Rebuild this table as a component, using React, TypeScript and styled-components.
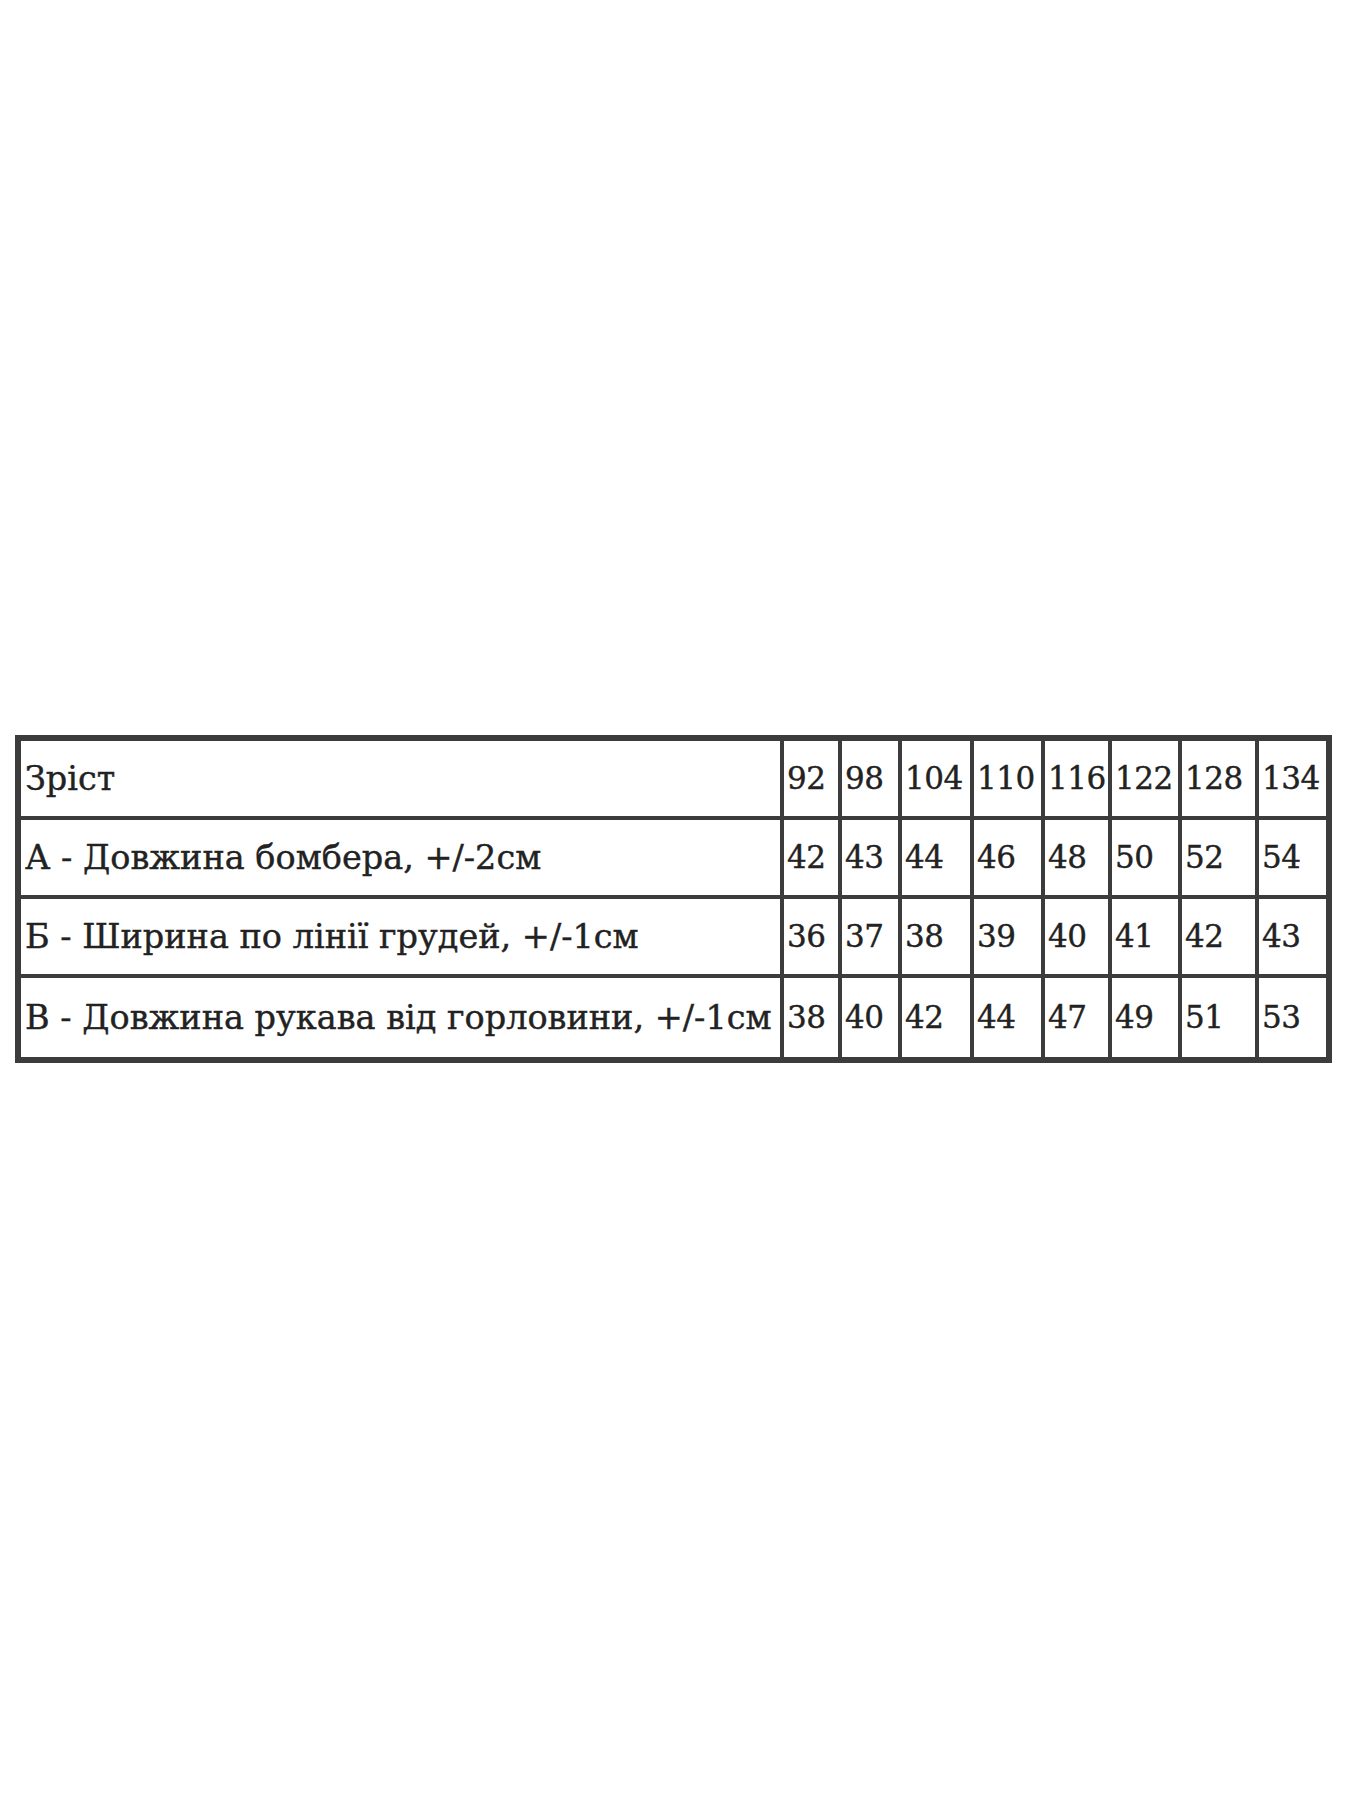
import React from 'react';
import styled, { createGlobalStyle } from 'styled-components';

const GlobalStyle = createGlobalStyle`
  html, body {
    margin: 0;
    padding: 0;
    background: #ffffff;
  }
  body {
    font-family: "DejaVu Serif", "Liberation Serif", serif;
    color: #222222;
  }
`;

const Page = styled.div`
  width: 1350px;
  min-height: 1800px;
  box-sizing: border-box;
  padding: 735px 0 0 15px;
`;

const SizeTable = styled.table`
  width: 1311px;
  table-layout: fixed;
  border-collapse: collapse;
  border: 6px solid #3c3c3c;
`;

const Row = styled.tr<{ $height: number }>`
  height: ${(p) => p.$height}px;
`;

const Cell = styled.td`
  border: 4px solid #3c3c3c;
  line-height: 1;
  white-space: nowrap;
  overflow: hidden;
  vertical-align: middle;
  -webkit-text-stroke: 0.4px #222222;
`;

const LabelCell = styled(Cell)`
  padding: 0 0 0 4px;
  font-size: 33.5px;
  letter-spacing: 0;
`;

const ValueCell = styled(Cell)`
  padding: 0 0 0 3px;
  font-size: 31px;
  letter-spacing: -0.5px;
  font-variant-numeric: oldstyle-nums;
`;

const columns = [764, 58, 60, 72, 71, 67, 70, 77, 72];

const rows: { label: string; values: string[]; height: number }[] = [
  { label: 'Зріст', values: ['92', '98', '104', '110', '116', '122', '128', '134'], height: 80 },
  {
    label: 'А - Довжина бомбера, +/-2см',
    values: ['42', '43', '44', '46', '48', '50', '52', '54'],
    height: 79,
  },
  {
    label: 'Б - Ширина по лінії грудей, +/-1см',
    values: ['36', '37', '38', '39', '40', '41', '42', '43'],
    height: 79,
  },
  {
    label: 'В - Довжина рукава від горловини, +/-1см',
    values: ['38', '40', '42', '44', '47', '49', '51', '53'],
    height: 84,
  },
];

const App = () => {
  return (
    <>
      <GlobalStyle />
      <Page>
        <SizeTable>
          <colgroup>
            {columns.map((w, i) => (
              <col key={i} style={{ width: w }} />
            ))}
          </colgroup>
          <tbody>
            {rows.map((row) => (
              <Row key={row.label} $height={row.height}>
                <LabelCell>{row.label}</LabelCell>
                {row.values.map((v, i) => (
                  <ValueCell key={i}>{v}</ValueCell>
                ))}
              </Row>
            ))}
          </tbody>
        </SizeTable>
      </Page>
    </>
  );
};

export default App;
